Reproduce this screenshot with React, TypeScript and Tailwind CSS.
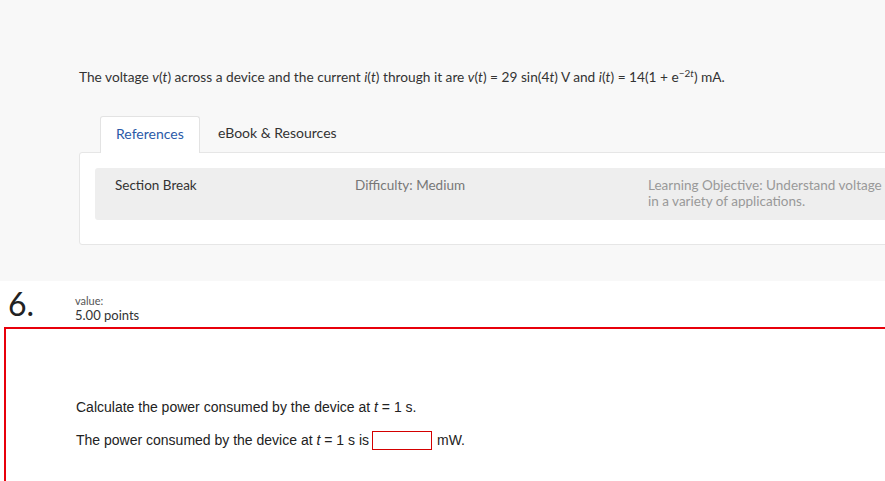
import React from 'react';

const sans = "font-['Lato','Open_Sans',sans-serif]";

const App: React.FC = () => {
  return (
    <div className={`w-[885px] h-[481px] overflow-hidden bg-white ${sans}`}>
      {/* Question stem */}
      <section className="bg-[#f8f8f8] h-[281px] pt-[67px] pl-[79px]">
        <p className="text-[13.7px] leading-[20px] text-[#333] whitespace-nowrap">
          The voltage <i>v</i>(<i>t</i>) across a device and the current <i>i</i>(<i>t</i>) through it are{' '}
          <i>v</i>(<i>t</i>) = 29 sin(4<i>t</i>) V and <i>i</i>(<i>t</i>) = 14(1 + e
          <sup className="text-[10px]">−2<i>t</i></sup>) mA.
        </p>

        {/* Tabs */}
        <div className="mt-[29px] flex items-end pl-[21px] text-[14px]">
          <div className="h-[37px] w-[100px] px-[15px] pb-[3px] flex items-center bg-white border border-b-0 border-[#e3e3e3] rounded-t-[3px] text-[#2b5aa8] -mb-px relative z-10">
            References
          </div>
          <div className="h-[36px] px-[18px] pb-[3px] flex items-center text-[#333]">eBook &amp; Resources</div>
        </div>

        <div className="w-[900px] h-[93px] bg-white border border-[#e6e6e6] rounded-[3px] pt-[15px] pl-[15px]">
          <div className="h-[52px] bg-[#eeeeee] rounded-[3px] flex pt-[9px] pl-[20px] text-[13.5px] leading-[16px]">
            <div className="w-[240px] shrink-0 text-[#333]">Section Break</div>
            <div className="w-[293px] shrink-0 text-[#777]">Difficulty: Medium</div>
            <div className="shrink-0 text-[#999] whitespace-nowrap">
              Learning Objective: Understand voltage
              <br />
              in a variety of applications.
            </div>
          </div>
        </div>
      </section>

      {/* Question header */}
      <section className="h-[46px] flex pl-[8px] pt-[5px]">
        <div className="w-[67px] text-[32px] leading-[36px] text-[#222]">6.</div>
        <div className="pt-[8px]">
          <div className="text-[11px] leading-[13px] text-[#555]">value:</div>
          <div className="text-[13px] leading-[16px] text-[#333]">5.00 points</div>
        </div>
      </section>

      {/* Answer box */}
      <section className="ml-[4px] w-[900px] h-[200px] border-2 border-[#e8000b] pt-[68px] pl-[70px] font-['Liberation_Sans',Arial,sans-serif] text-[14px] text-[#222]">
        <p className="leading-[20px]">
          Calculate the power consumed by the device at <i>t</i> = 1 s.
        </p>
        <p className="mt-[13px] leading-[20px] flex items-center">
          <span>The power consumed by the device at <i>t</i> = 1 s is</span>
          <span className="ml-[3px] inline-block w-[60px] h-[19px] border border-[#d40000] bg-white"></span>
          <span className="ml-[5px]">mW.</span>
        </p>
      </section>
    </div>
  );
};

export default App;
